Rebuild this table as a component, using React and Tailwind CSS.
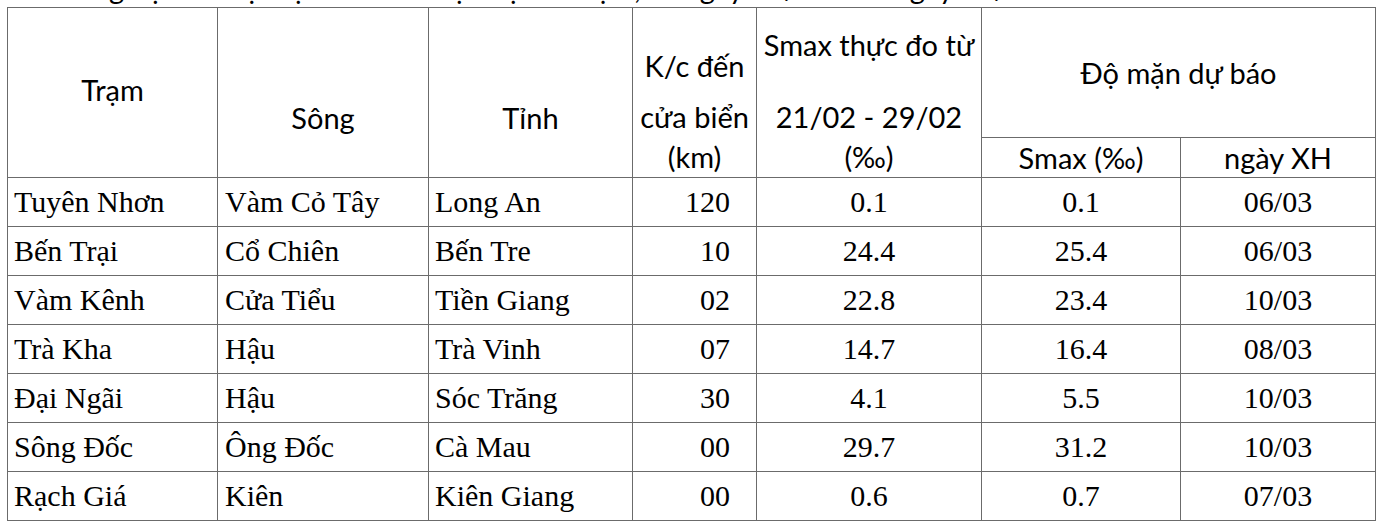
import React from "react";

const rows = [
  ["Tuyên Nhơn", "Vàm Cỏ Tây", "Long An", "120", "0.1", "0.1", "06/03"],
  ["Bến Trại", "Cổ Chiên", "Bến Tre", "10", "24.4", "25.4", "06/03"],
  ["Vàm Kênh", "Cửa Tiểu", "Tiền Giang", "02", "22.8", "23.4", "10/03"],
  ["Trà Kha", "Hậu", "Trà Vinh", "07", "14.7", "16.4", "08/03"],
  ["Đại Ngãi", "Hậu", "Sóc Trăng", "30", "4.1", "5.5", "10/03"],
  ["Sông Đốc", "Ông Đốc", "Cà Mau", "00", "29.7", "31.2", "10/03"],
  ["Rạch Giá", "Kiên", "Kiên Giang", "00", "0.6", "0.7", "07/03"],
];

const head = "border border-[#6b6b6b] p-0 align-top text-center font-normal";
const cell = "border border-[#6b6b6b] py-0 align-middle";

export default function App() {
  return (
    <div className="w-[1390px] h-[530px] bg-white overflow-hidden text-black">
      {/* caption line, cut off at the top of the shot */}
      <div className="h-[7px] overflow-hidden flex items-end pl-[60px]">
        <p className="text-[29px] leading-[36px] whitespace-nowrap font-['Lato',sans-serif] -translate-y-[1px]">
          Bảng dự báo độ mặn lớn nhất tại một số trạm, từ ngày 01/03 đến ngày 10/03
        </p>
      </div>

      <table className="ml-[7px] w-[1368px] table-fixed border-collapse">
        <colgroup>
          <col className="w-[210px]" />
          <col className="w-[211px]" />
          <col className="w-[204px]" />
          <col className="w-[124px]" />
          <col className="w-[225px]" />
          <col className="w-[199px]" />
          <col className="w-[195px]" />
        </colgroup>
        <thead className="font-['Lato',sans-serif] text-[29px] leading-[36px]">
          <tr className="h-[130px]">
            <th rowSpan={2} className={head}>
              <div className="pt-[64px]">Trạm</div>
            </th>
            <th rowSpan={2} className={head}>
              <div className="pt-[92px]">Sông</div>
            </th>
            <th rowSpan={2} className={head}>
              <div className="pt-[92px]">Tỉnh</div>
            </th>
            <th rowSpan={2} className={head}>
              <div className="pt-[40px]">K/c đến</div>
              <div className="mt-[15px]">cửa biển</div>
              <div className="mt-[4px]">(km)</div>
            </th>
            <th rowSpan={2} className={head}>
              <div className="pt-[19px]">Smax thực đo từ</div>
              <div className="mt-[36px]">21/02 - 29/02</div>
              <div className="mt-[4px]">(‰)</div>
            </th>
            <th colSpan={2} className="border border-[#6b6b6b] p-0 align-middle text-center font-normal">
              Độ mặn dự báo
            </th>
          </tr>
          <tr className="h-[40px]">
            <th className="border border-[#6b6b6b] p-0 align-middle text-center font-normal">Smax (‰)</th>
            <th className="border border-[#6b6b6b] p-0 align-middle text-center font-normal">ngày XH</th>
          </tr>
        </thead>
        <tbody className="font-['Liberation_Serif',serif] text-[30px] leading-[36px]">
          {rows.map((r, i) => (
            <tr key={i} className="h-[49px]">
              <td className={cell + " pl-[6px] text-left"}>{r[0]}</td>
              <td className={cell + " pl-[7px] text-left"}>{r[1]}</td>
              <td className={cell + " pl-[6px] text-left"}>{r[2]}</td>
              <td className={cell + " pr-[26px] text-right"}>{r[3]}</td>
              <td className={cell + " text-center"}>{r[4]}</td>
              <td className={cell + " text-center"}>{r[5]}</td>
              <td className={cell + " text-center"}>{r[6]}</td>
            </tr>
          ))}
        </tbody>
      </table>
    </div>
  );
}
